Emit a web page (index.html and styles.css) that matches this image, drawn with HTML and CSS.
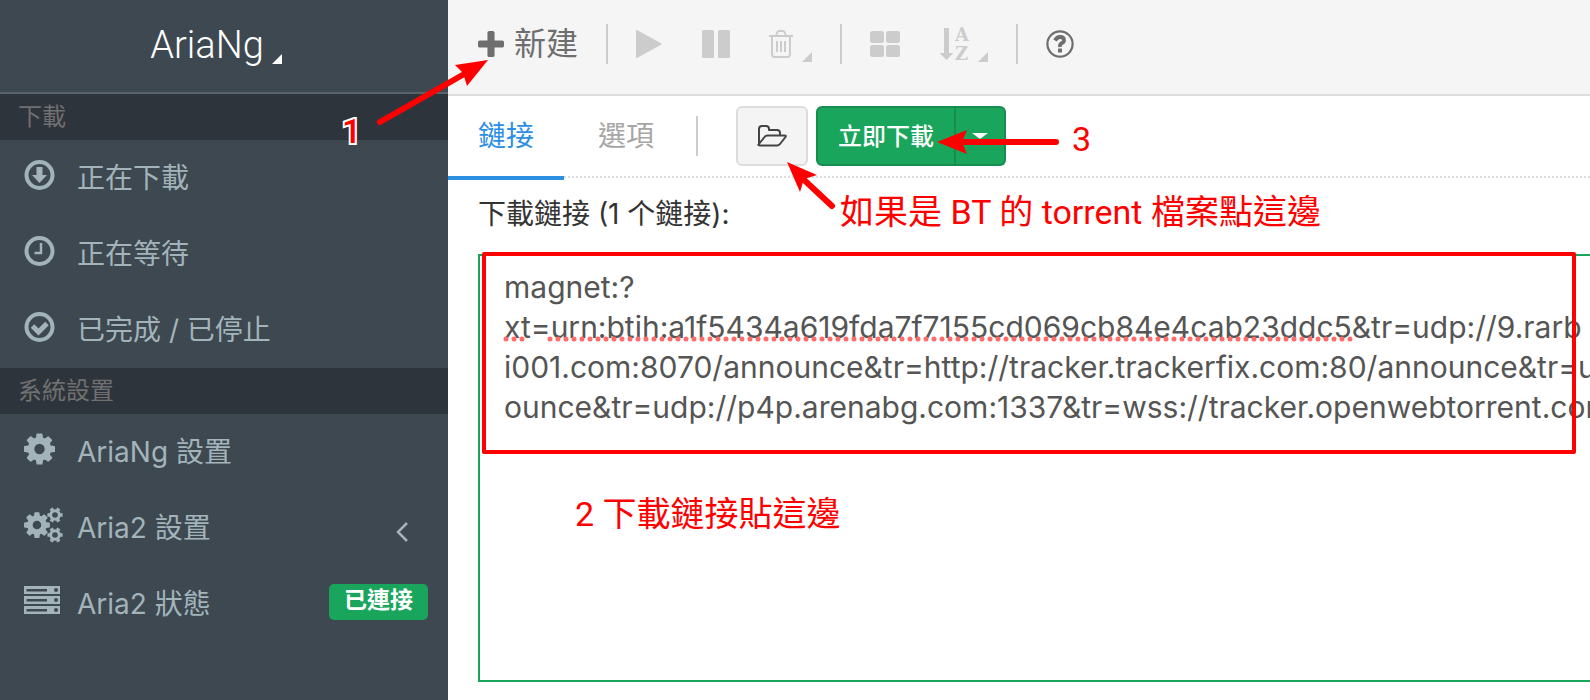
FILE: index.html
```html
<!DOCTYPE html>
<html lang="zh-TW">
<head>
    <meta charset="UTF-8">
    <meta name="viewport" content="width=device-width, initial-scale=1.0">
    <title>AriaNg</title>
    <link rel="stylesheet" href="styles.css">
</head>
<body>

<div class="wrapper">
    <aside class="sidebar">
        <a class="logo" href="#">AriaNg <i class="corner"></i></a>

        <nav>
            <h2 class="menu-header">下載</h2>
            <a class="menu-item" href="#downloading">
                <svg class="menu-icon" viewBox="0 0 40 32">
                    <circle cx="15.500" cy="16" r="13" fill="none" stroke="currentColor" stroke-width="4"/>
                    <path d="M12.500 8h6v8H23l-7.500 8L8 16h4.500z" fill="currentColor"/>
                </svg>
                <span>正在下載</span>
            </a>
            <a class="menu-item" href="#waiting">
                <svg class="menu-icon" viewBox="0 0 40 32">
                    <circle cx="15.500" cy="16" r="13" fill="none" stroke="currentColor" stroke-width="4"/>
                    <path d="M17 8v10h-6.500" fill="none" stroke="currentColor" stroke-width="2.500"/>
                </svg>
                <span>正在等待</span>
            </a>
            <a class="menu-item" href="#stopped">
                <svg class="menu-icon" viewBox="0 0 40 32">
                    <circle cx="15.500" cy="16" r="13" fill="none" stroke="currentColor" stroke-width="4"/>
                    <path d="M8.500 15l6 6 8.500-8.500" fill="none" stroke="currentColor" stroke-width="5"/>
                </svg>
                <span>已完成 / 已停止</span>
            </a>

            <h2 class="menu-header">系統設置</h2>
            <a class="menu-item" href="#settings">
                <svg class="menu-icon" viewBox="0 0 40 32">
                    <path transform="translate(-2.600 -2.100) scale(.0202)" fill="currentColor" d="M1152 896q0-106-75-181t-181-75-181 75-75 181 75 181 181 75 181-75 75-181zm512-109v222q0 12-8 23t-20 13l-185 28q-19 54-39 91 35 50 107 138 10 12 10 25t-9 23q-27 37-99 108t-94 71q-12 0-26-9l-138-108q-44 23-91 38-16 136-29 186-7 28-36 28h-222q-14 0-24.500-8.500t-11.500-21.500l-28-184q-49-16-90-37l-141 107q-10 9-25 9-14 0-25-11-126-114-165-168-7-10-7-23 0-12 8-23 15-21 51-66.500t54-70.500q-27-50-41-99l-183-27q-13-2-21-12.500t-8-23.500v-222q0-12 8-23t19-13l186-28q14-46 39-92-40-57-107-138-10-12-10-24 0-10 9-23 26-36 98.500-107.500t94.500-71.500q13 0 26 10l138 107q44-23 91-38 16-136 29-186 7-28 36-28h222q14 0 24.500 8.500t11.500 21.500l28 184q49 16 90 37l142-107q9-9 24-9 13 0 25 10 129 119 165 170 7 8 7 22 0 12-8 23-15 21-51 66.500t-54 70.500q26 50 41 98l183 28q13 2 21 12.500t8 23.500z"/>
                </svg>
                <span>AriaNg 設置</span>
            </a>
            <a class="menu-item" href="#aria2">
                <svg class="menu-icon cogs" viewBox="0 0 40 36">
                    <defs>
                        <g id="small-cog" fill="none" stroke="currentColor">
                            <circle r="4.300" stroke-width="3"/>
                            <path stroke-width="3.600" d="M-7.600 0h2.500M5.100 0h2.500M-3.800-6.600l1.200 2.100M3.800 6.600l-1.200-2.100M3.800-6.600l-1.200 2.100M-3.800 6.600l1.200-2.100"/>
                        </g>
                    </defs>
                    <path transform="translate(-2.100 3) scale(.0168)" fill="currentColor" d="M1152 896q0-106-75-181t-181-75-181 75-75 181 75 181 181 75 181-75 75-181zm512-109v222q0 12-8 23t-20 13l-185 28q-19 54-39 91 35 50 107 138 10 12 10 25t-9 23q-27 37-99 108t-94 71q-12 0-26-9l-138-108q-44 23-91 38-16 136-29 186-7 28-36 28h-222q-14 0-24.500-8.500t-11.500-21.500l-28-184q-49-16-90-37l-141 107q-10 9-25 9-14 0-25-11-126-114-165-168-7-10-7-23 0-12 8-23 15-21 51-66.500t54-70.500q-27-50-41-99l-183-27q-13-2-21-12.500t-8-23.500v-222q0-12 8-23t19-13l186-28q14-46 39-92-40-57-107-138-10-12-10-24 0-10 9-23 26-36 98.500-107.500t94.500-71.500q13 0 26 10l138 107q44-23 91-38 16-136 29-186 7-28 36-28h222q14 0 24.500 8.500t11.500 21.500l28 184q49 16 90 37l142-107q9-9 24-9 13 0 25 10 129 119 165 170 7 8 7 22 0 12-8 23-15 21-51 66.500t-54 70.500q26 50 41 98l183 28q13 2 21 12.500t8 23.500z"/>
                    <use href="#small-cog" x="31" y="8"/>
                    <use href="#small-cog" x="31" y="28"/>
                </svg>
                <span>Aria2 設置</span>
                <svg class="chevron" viewBox="0 0 12 20"><path d="M11 1L2 10l9 9" fill="none" stroke="currentColor" stroke-width="2.500"/></svg>
            </a>
            <a class="menu-item" href="#status">
                <svg class="menu-icon" viewBox="0 0 40 32">
                    <path fill="currentColor" fill-rule="evenodd" d="M0 1h36v8H0zM2.500 4v2.500H23V4zM0 11h36v8H0zM2.500 14v2.500H23V14zM0 21h36v8H0zM2.500 24v2.500H23V24z"/>
                    <g class="hole"><circle cx="32" cy="5" r="2"/><circle cx="32" cy="15" r="2"/><circle cx="32" cy="25" r="2"/></g>
                </svg>
                <span>Aria2 狀態</span>
                <span class="badge">已連接</span>
            </a>
        </nav>
    </aside>

    <main class="content">
        <header class="toolbar">
            <button class="tool new-task">
                <svg width="26" height="26" viewBox="192 128 1408 1408"><path fill="currentColor" d="M1600 736v192q0 40-28 68t-68 28h-416v416q0 40-28 68t-68 28h-192q-40 0-68-28t-28-68v-416h-416q-40 0-68-28t-28-68v-192q0-40 28-68t68-28h416v-416q0-40 28-68t68-28h192q40 0 68 28t28 68v416h416q40 0 68 28t28 68z"/></svg>
                新建
            </button>
            <span class="divider"></span>
            <button class="tool play" aria-label="開始" disabled>
                <svg width="26" height="28" viewBox="0 0 26 28"><path fill="currentColor" d="M0 1q0-1.500 1.500-.7l23.500 13q1 .7 0 1.400L1.500 27.700Q0 28.500 0 27z"/></svg>
            </button>
            <button class="tool pause" aria-label="暫停" disabled>
                <svg width="28" height="28" viewBox="0 0 28 28"><rect width="12" height="28" rx="1.500" fill="currentColor"/><rect x="16" width="12" height="28" rx="1.500" fill="currentColor"/></svg>
            </button>
            <button class="tool" aria-label="刪除" disabled>
                <svg width="28" height="28" viewBox="0 0 28 28"><path fill="none" stroke="currentColor" stroke-width="2" d="M1 6h24M4 6v18q0 3 2.500 3h13q2.500 0 2.500-3V6M8 6l1.500-4q.4-1 1.500-1h4q1.100 0 1.500 1L18 6M9 11v11M13 11v11M17 11v11"/></svg>
                <i class="corner"></i>
            </button>
            <span class="divider"></span>
            <button class="tool grid" aria-label="顯示" disabled>
                <svg width="30" height="26" viewBox="0 0 30 26"><g fill="currentColor"><rect width="14" height="12" rx="2.500"/><rect x="16" width="14" height="12" rx="2.500"/><rect y="14" width="14" height="12" rx="2.500"/><rect x="16" y="14" width="14" height="12" rx="2.500"/></g></svg>
            </button>
            <button class="tool" aria-label="排序" disabled>
                <svg class="sort" width="32" height="36" viewBox="0 0 32 36"><path fill="currentColor" d="M4 2.500Q4 2 4.500 2h4Q9 2 9 2.500V27h3.500q.9 0 .3.800L7 33.500q-.5.400-1 0L.2 27.800q-.6-.8.300-.8H4z"/><text x="15" y="15" class="sort-letter">A</text><text x="15" y="34" class="sort-letter">Z</text></svg>
                <i class="corner"></i>
            </button>
            <span class="divider"></span>
            <button class="tool" aria-label="幫助">
                <svg width="28" height="28" viewBox="0 0 28 28"><circle cx="14" cy="14" r="12.600" fill="none" stroke="currentColor" stroke-width="2.200"/><path fill="none" stroke="currentColor" stroke-width="3.800" d="M9 10.500q2-3.500 5-3.500 4 0 4 3.200 0 1.800-2.200 3T14 17"/><rect x="12" y="18.500" width="4" height="4" rx=".500" fill="currentColor"/></svg>
            </button>
        </header>

        <div class="tabs">
            <a class="tab active" href="#links">鏈接</a>
            <a class="tab" href="#options">選項</a>
            <span class="divider"></span>
            <button class="btn open-file" aria-label="打開種子文件">
                <svg width="30" height="22" viewBox="0 0 30 22"><path fill="none" stroke="currentColor" stroke-width="2" stroke-linejoin="round" d="M2 19V4q0-3 3-3h4q3 0 3 3v1h8q3 0 3 3v2.500M1.500 19.500L7.500 12q1-1.500 3-1.500h17q2 0 1 1.500l-5.500 7q-1.200 1.500-3 1.500H3q-2 0-1.500-1z"/></svg>
            </button>
            <div class="btn-group">
                <button class="btn start">立即下載</button>
                <button class="btn start more" aria-label="更多"><i class="caret"></i></button>
            </div>
        </div>

        <form class="new-form">
            <label for="urls">下載鏈接 (1 个鏈接):</label>
            <div class="url-box">
                <textarea id="urls" wrap="off" spellcheck="false">magnet:?
xt=urn:btih:a1f5434a619fda7f7155cd069cb84e4cab23ddc5&amp;tr=udp://9.rarb
i001.com:8070/announce&amp;tr=http://tracker.trackerfix.com:80/announce&amp;tr=u
ounce&amp;tr=udp://p4p.arenabg.com:1337&amp;tr=wss://tracker.openwebtorrent.com</textarea>
                <svg class="spelling" width="850" height="6" viewBox="0 0 850 6"><path d="M3 3H22M47 3H849"/></svg>
            </div>
        </form>
    </main>

    <!-- step notes drawn over the page -->
    <div class="frame"></div>
    <svg class="arrows" width="1100" height="220" viewBox="0 0 1100 220">
        <path class="shaft" d="M380 122L466 73M832 206L802 178M1056 142H960"/>
        <path class="head" d="M488 60L455 65 463 73 467 86zM787 162L817 175 804 179 800 192zM937 142L967 130 962 142 967 154z"/>
    </svg>
    <span class="note note-one">1</span>
    <span class="note note-two">2 下載鏈接貼這邊</span>
    <span class="note note-three">3</span>
    <span class="note note-torrent">如果是 BT 的 torrent 檔案點這邊</span>
</div>

</body>
</html>
```
FILE: styles.css
```css
* {
    box-sizing: border-box;
}

body {
    margin: 0;
    background-color: #fff;
    font-family: Inter, "Noto Sans CJK TC", sans-serif;
    font-size: 28px;
    line-height: 40px;
    color: #333;
}

a {
    text-decoration: none;
    color: inherit;
}

button {
    font: inherit;
    color: inherit;
    background: none;
    border: none;
    padding: 0;
    cursor: pointer;
}

.wrapper {
    position: relative;
    display: flex;
    min-height: 100vh;
    overflow: hidden;
}

/* Sidebar */
.sidebar {
    flex: 0 0 448px;
    background-color: #3d4851;
    color: #a2b4ba;
}

.logo {
    display: flex;
    justify-content: center;
    align-items: center;
    gap: 8px;
    height: 94px;
    padding: 0 16px 2px 0;
    border-bottom: 2px solid #5a646b;
    color: #fff;
    font-family: Roboto, sans-serif;
    font-size: 38px;
    font-weight: 300;
}

.corner {
    border-left: 10px solid transparent;
    border-bottom: 10px solid currentColor;
    align-self: flex-end;
}

.logo .corner {
    margin-bottom: 26px;
}

.menu-header {
    margin: 0;
    padding: 3px 18px;
    background-color: #2e343c;
    color: #707070;
    font-size: 24px;
    font-weight: normal;
}

.menu-item {
    display: flex;
    align-items: center;
    height: 76px;
    padding: 0 20px 0 24px;
}

.menu-item span {
    white-space: pre;
}

.menu-icon {
    width: 40px;
    height: 32px;
    margin: 0 13px 6px 0;
}

.cogs {
    height: 36px;
}

.hole {
    fill: #3d4851;
}

.chevron {
    width: 12px;
    height: 20px;
    margin: 8px 20px 0 auto;
}

.badge {
    margin: 0 0 4px auto;
    padding: 0 15px 4px;
    border-radius: 5px;
    background-color: #1aa55c;
    color: #fff;
    font-size: 23px;
    font-weight: bold;
    line-height: 32px;
}

/* Toolbar */
.content {
    flex: 1;
    min-width: 0;
}

.toolbar {
    display: flex;
    align-items: center;
    height: 96px;
    padding: 0 30px 6px;
    background-color: #f5f5f5;
    border-bottom: 2px solid #ddd;
    color: #6e6e6e;
}

.tool {
    display: flex;
    align-items: center;
    height: 40px;
}

.tool:disabled {
    color: #ccc;
    cursor: default;
}

.tool .corner {
    margin: 0 0 2px 6px;
}

.new-task {
    gap: 10px;
    font-size: 32px;
}

.play {
    margin-right: 40px;
}

.pause {
    margin-right: 38px;
}

.sort {
    overflow: visible;
}

.sort-letter {
    fill: currentColor;
    font-family: "DejaVu Serif", serif;
    font-size: 18px;
    font-weight: bold;
}

.divider {
    width: 2px;
    height: 40px;
    margin: 0 28px;
    background-color: #ccc;
}

.grid {
    margin-right: 40px;
}

/* Tabs */
.tabs {
    display: flex;
    align-items: center;
    height: 84px;
    background: repeating-linear-gradient(to right, #ddd 0 2px, transparent 2px 4px) 0 80px / 100% 2px no-repeat;
}

.tab {
    height: 84px;
    margin-right: 4px;
    padding: 20px 30px;
    color: #a6a6a6;
}

.tab.active {
    color: #2d8fe2;
    border-bottom: 4px solid #2d8fe2;
}

.tabs .divider {
    margin: 0 38px 4px 8px;
}

.btn {
    display: flex;
    align-items: center;
    justify-content: center;
    height: 60px;
    margin-bottom: 4px;
    border: 2px solid #ddd;
    border-radius: 6px;
    font-size: 24px;
}

.open-file {
    width: 72px;
    margin-right: 8px;
    background-color: #f4f4f4;
    color: #444;
}

.btn-group {
    display: flex;
}

.start {
    padding: 2px 20px 0;
    background-color: #1aa55c;
    border-color: #168d4e;
    border-radius: 6px 0 0 6px;
    color: #fff;
    font-weight: 500;
}

.more {
    width: 50px;
    padding: 0;
    border-left: none;
    border-radius: 0 6px 6px 0;
}

.caret {
    border: 8px solid transparent;
    border-top: 6px solid #fff;
    border-bottom: none;
}

/* Form */
.new-form {
    padding: 14px 0 18px 30px;
}

.new-form label {
    display: block;
    margin-bottom: 20px;
}

.url-box {
    position: relative;
    margin-right: -30px;
}

textarea {
    display: block;
    width: 100%;
    height: 428px;
    padding: 11px 24px;
    border: 2px solid #1aa55c;
    outline: none;
    resize: none;
    overflow: hidden;
    white-space: pre;
    background-color: #fff;
    color: #555;
    font-family: Inter, sans-serif;
    font-size: 30px;
    line-height: 40px;
}

.spelling {
    position: absolute;
    left: 25px;
    top: 82px;
    fill: none;
    stroke: #ff6b6b;
    stroke-width: 5;
    stroke-linecap: round;
    stroke-dasharray: 0 8;
}

/* Notes */
.frame {
    position: absolute;
    left: 482px;
    top: 252px;
    right: 14px;
    height: 202px;
    border: 4px solid #f00;
    border-radius: 2px;
    pointer-events: none;
}

.arrows {
    position: absolute;
    left: 0;
    top: 0;
    pointer-events: none;
}

.shaft {
    fill: none;
    stroke: #f00;
    stroke-width: 6;
    stroke-linecap: round;
}

.head {
    fill: #f00;
}

.note {
    position: absolute;
    color: #f00;
    font-family: Roboto, "Noto Sans CJK TC", sans-serif;
    font-size: 34px;
    white-space: nowrap;
}

.note-one {
    left: 342px;
    top: 111px;
    font-weight: 500;
    -webkit-text-stroke: 4px #fff;
    paint-order: stroke fill;
}

.note-two {
    left: 575px;
    top: 494px;
}

.note-three {
    left: 1072px;
    top: 119px;
}

.note-torrent {
    left: 840px;
    top: 192px;
}
```
